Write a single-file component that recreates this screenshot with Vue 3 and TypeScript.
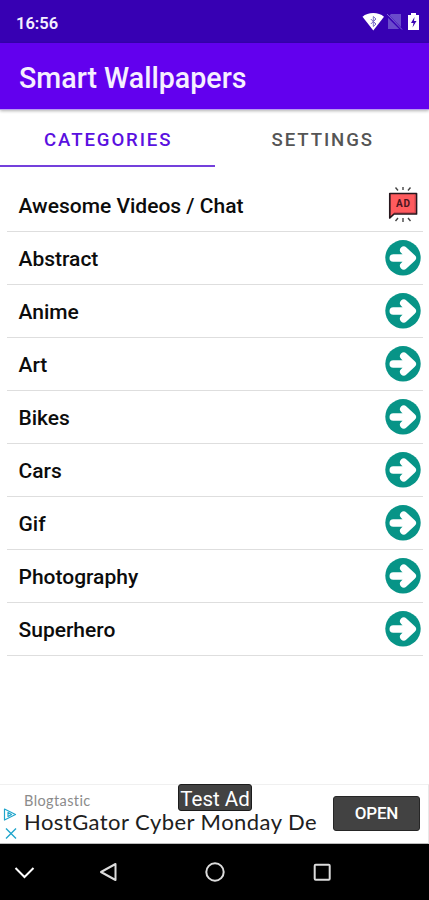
<script setup lang="ts">
import { ref } from 'vue'

interface Category {
  name: string
  ad?: boolean
}

const activeTab = ref('Categories')
const tabs: string[] = ['Categories', 'Settings']
const categories: Category[] = [
  { name: 'Awesome Videos / Chat', ad: true },
  { name: 'Abstract' },
  { name: 'Anime' },
  { name: 'Art' },
  { name: 'Bikes' },
  { name: 'Cars' },
  { name: 'Gif' },
  { name: 'Photography' },
  { name: 'Superhero' },
]
</script>

<template>
  <div class="screen">
    <div class="status">
      <span class="clock">16:56</span>
      <svg class="status-icons" width="60" height="22" viewBox="0 0 60 22">
        <path d="M.5 5.8C6 .8 16.500 .8 22 5.800L11.300 19.500Z" fill="#fff" />
        <path d="M11.300 5.500 14 8 11.300 10.500 14 13 11.300 15.500V5.500M8.800 8l5 5M8.800 13l5-5" fill="none" stroke="#786bc6" stroke-width="1" />
        <path d="M29 3h10v15H26V6Z" fill="#6a4bcb" />
        <path d="M24.500 3.500 40 19" stroke="#3700b3" stroke-width="2.500" />
        <path d="M25 3 40 18.500" stroke="#8065d6" stroke-width="1" />
        <path d="M46 4h3V2h5v2h3v15H46Z" fill="#fff" />
        <path d="M52.500 6 49 12h2.500L50.500 16.500 54.500 10H52Z" fill="#3700b3" />
      </svg>
    </div>
    <header class="appbar"><h1>Smart Wallpapers</h1></header>
    <nav class="tabs">
      <button
        v-for="tab in tabs"
        :key="tab"
        class="tab"
        :class="{ active: tab === activeTab }"
        @click="activeTab = tab"
      ><span>{{ tab }}</span></button>
    </nav>
    <ul class="list">
      <li v-for="item in categories" :key="item.name" class="row">
        <span class="label">{{ item.name }}</span>
        <svg v-if="item.ad" width="36" height="36" viewBox="0 0 36 36">
          <path d="M4.800 6.500H31.500V27H9L4.800 31Z" fill="#ff5b5e" stroke="#26171e" stroke-width="1.700" stroke-linejoin="round" />
          <path d="M9 25.500H30V8" fill="none" stroke="#d44853" stroke-width="1" />
          <path d="M10.500 .5l2.500 3M18 0v3M25.500 .5l-2.500 3M10.500 34l2.500-3M18 35v-4M25.500 34l-2.500-3" stroke="#444" stroke-width="1.400" />
          <text x="18.300" y="20.300" text-anchor="middle" class="ad-text">AD</text>
        </svg>
        <svg v-else width="36" height="36" viewBox="0 0 36 36">
          <circle cx="18" cy="17.800" r="17.700" fill="#079487" />
          <path d="M8.300 18H26M18.800 10.200 27.200 18 18.800 25.800" fill="none" stroke="#fff" stroke-width="7.600" stroke-linecap="round" stroke-linejoin="round" />
        </svg>
      </li>
    </ul>
    <section class="banner">
      <div class="choices">
        <svg width="14" height="32" viewBox="0 0 14 32">
          <path d="M1.500 2 12.500 7.500 1.500 13ZM5 5.500v4l3.500-2Z" fill="none" stroke="#20a5cc" stroke-width="1.200" stroke-linejoin="round" />
          <path d="M3 21.500 13 31.500M13 21.500 3 31.500" stroke="#20a5cc" stroke-width="1.400" />
        </svg>
      </div>
      <div class="copy">
        <span class="advertiser">Blogtastic</span>
        <span class="headline">HostGator Cyber Monday De</span>
      </div>
      <button class="open">OPEN</button>
      <span class="test-ad">Test Ad</span>
    </section>
    <footer class="navbar">
      <svg width="429" height="56" viewBox="0 0 429 56" fill="none" stroke="#dcdcdc" stroke-width="2">
        <path d="M15.500 24 24.500 33 33.500 24" stroke="#fff" />
        <path d="M115.500 20V36L101 28Z" stroke-linejoin="round" />
        <circle cx="215" cy="28" r="8.700" />
        <rect x="314.700" y="20.700" width="15" height="15" rx="1" />
      </svg>
    </footer>
  </div>
</template>

<style>
body {
  margin: 0;
  background: #fff;
}
</style>

<style scoped>
.screen {
  display: flex;
  flex-direction: column;
  width: 429px;
  height: 900px;
  overflow: hidden;
  background: #fff;
  font-family: Roboto, "Liberation Sans", sans-serif;
  color: #0c0c0c;
}
.status {
  flex: none;
  display: flex;
  align-items: center;
  justify-content: space-between;
  box-sizing: border-box;
  height: 43px;
  padding: 0 7px 0 16px;
  background: #3700b3;
}
.clock {
  padding-top: 4px;
  font-size: 16.5px;
  font-weight: 600;
  line-height: 20px;
  color: #f4efff;
}
.appbar {
  flex: none;
  display: flex;
  align-items: center;
  height: 66px;
  padding-left: 19px;
  border-bottom: 1px solid #b99bf0;
  background: #6200ee;
  background-clip: padding-box;
  box-shadow: 0 1px 3px rgba(0, 0, 0, 0.3);
}
h1 {
  margin: 4px 0 0;
  font-size: 28.6px;
  font-weight: 500;
  line-height: 34px;
  color: #f6efff;
}
.tabs {
  flex: none;
  display: flex;
  height: 57px;
}
.tab {
  flex: 1;
  box-sizing: border-box;
  padding: 4px 0 0 2px;
  border: 0;
  border-bottom: 2px solid transparent;
  background: none;
  font: 500 18.6px/22px Roboto, "Liberation Sans", sans-serif;
  letter-spacing: 1.9px;
  text-transform: uppercase;
  color: #555;
}
.tab.active {
  color: #5a10e0;
  border-bottom-color: #7440dc;
}
.list {
  flex: 1;
  margin: 0;
  padding: 12px 6px 0 7px;
  list-style: none;
}
.row {
  display: flex;
  align-items: center;
  justify-content: space-between;
  box-sizing: border-box;
  height: 53px;
  padding: 0 2px 0 11.5px;
  border-bottom: 1px solid #dedede;
  font-size: 21px;
  font-weight: 500;
}
.label {
  padding-top: 2px;
}
.ad-text {
  font: 700 10px Roboto, sans-serif;
  letter-spacing: 0.6px;
  fill: #4a1520;
}
.banner {
  flex: none;
  position: relative;
  display: flex;
  box-sizing: border-box;
  height: 60px;
  padding-right: 8px;
  border-top: 1px solid #f0f0f0;
  border-bottom: 1px solid #bbb;
  border-right: 1px solid #e8e8e8;
}
.choices {
  width: 24px;
  padding: 22px 0 0 3px;
  box-sizing: border-box;
}
.copy {
  flex: 1;
  display: flex;
  flex-direction: column;
  padding-top: 7px;
  white-space: nowrap;
}
.advertiser {
  font: 400 14.5px/17px Lato, Roboto, sans-serif;
  letter-spacing: 0.4px;
  color: #8b8b8b;
}
.headline {
  font: 400 22px/26px Lato, Roboto, sans-serif;
  letter-spacing: 0.45px;
  color: #202020;
}
.open {
  width: 87px;
  height: 35px;
  margin-top: 11px;
  padding: 0;
  border: 1px solid #262626;
  border-radius: 3px;
  background: #424242;
  color: #fff;
  font: 500 17px/33px Roboto, sans-serif;
  letter-spacing: -0.2px;
}
.test-ad {
  position: absolute;
  left: 178px;
  top: -1px;
  box-sizing: border-box;
  width: 74px;
  height: 27px;
  border: 1px solid #1c1c1c;
  border-radius: 3px;
  background: #424242;
  color: #fff;
  font: 400 20.500px/28px Roboto, sans-serif;
  text-align: center;
  white-space: nowrap;
}
.navbar {
  flex: none;
  height: 56px;
  background: #000;
}
</style>
